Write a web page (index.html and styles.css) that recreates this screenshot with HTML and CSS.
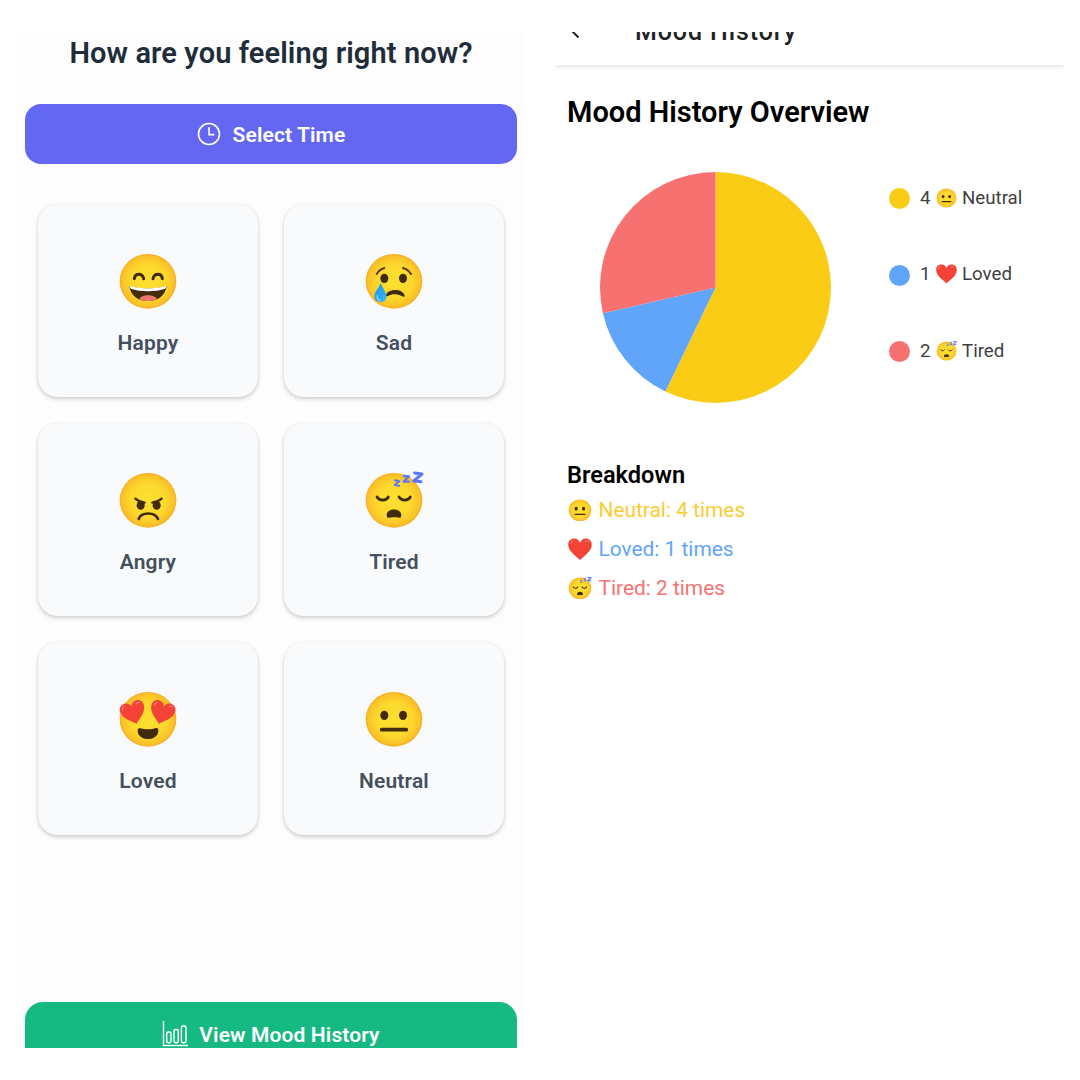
FILE: index.html
```html
<!DOCTYPE html>
<html lang="en">
<head>
<meta charset="utf-8">
<title>Mood Tracker</title>
<link rel="stylesheet" href="styles.css">
</head>
<body>
<svg class="defs" aria-hidden="true">
  <defs>
    <radialGradient id="skin" cx=".5" cy=".5" r=".52">
      <stop offset="0" stop-color="#fde030"/>
      <stop offset=".6" stop-color="#fcd82d"/>
      <stop offset=".88" stop-color="#fac228"/>
      <stop offset="1" stop-color="#f7a01f"/>
    </radialGradient>
    <linearGradient id="drop" x1="0" x2="1" y1="0" y2="1">
      <stop offset="0" stop-color="#1d8fe6"/>
      <stop offset="1" stop-color="#35b8fb"/>
    </linearGradient>
    <symbol id="heart" viewBox="0 0 100 92">
      <path fill="#f44336" d="M50 91C42 80 3 58 1 29C0 11 12 1 26 1C38 1 47 9 50 19C53 9 62 1 74 1C88 1 100 11 99 29C97 58 58 80 50 91Z"/>
      <path fill="#ff8276" d="M10 24C10 14 18 8 27 9C20 12 15 17 14 26ZM69 12C76 6 86 9 89 16C83 13 76 13 70 17Z"/>
    </symbol>
    <symbol id="happy" viewBox="0 0 180 170">
      <ellipse cx="90" cy="85" rx="85" ry="82" fill="url(#skin)"/>
      <path d="M49 77C51 59 73 59 77 77M105 77C109 59 131 59 133 77" fill="none" stroke="#422b0d" stroke-width="9" stroke-linecap="round"/>
      <path fill="#422b0d" d="M34 99C72 110 108 110 146 99C142 127 121 144 90 144C59 144 37 127 34 99Z"/>
      <path fill="#fff" d="M34 98C72 109 108 109 146 98L142 107C112 117 68 117 38 107Z"/>
      <path fill="#ed7770" d="M64 138C71 123 109 123 117 138C101 146 80 146 64 138Z"/>
    </symbol>
    <symbol id="sad" viewBox="0 0 180 170">
      <ellipse cx="90" cy="85" rx="85" ry="82" fill="url(#skin)"/>
      <path d="M38 63Q47 49 61 45M117 45Q132 49 141 63" fill="none" stroke="#5b3a0f" stroke-width="6" stroke-linecap="round"/>
      <ellipse cx="61" cy="76" rx="12" ry="14" fill="#422b0d"/><ellipse cx="117" cy="76" rx="12" ry="14" fill="#422b0d"/>
      <path fill="#422b0d" d="M66 130C65 106 118 104 122 128C122 133 117 131 113 129C98 122 84 123 72 129Z"/>
      <path fill="url(#drop)" d="M50 89C46 103 31 116 31 130C31 142 40 147 50 147C60 147 68 140 67 128C66 114 54 104 50 89Z"/>
      <path d="M40 128Q38 140 49 142" fill="none" stroke="#8bd6ff" stroke-width="4" stroke-linecap="round"/>
    </symbol>
    <symbol id="angry" viewBox="0 0 180 170">
      <ellipse cx="90" cy="85" rx="85" ry="82" fill="url(#skin)"/>
      <ellipse cx="68" cy="100" rx="12" ry="13" fill="#422b0d"/><ellipse cx="116" cy="100" rx="12" ry="13" fill="#422b0d"/>
      <path d="M52 80Q63 90 80 92M131 80Q120 90 103 92" fill="none" stroke="#422b0d" stroke-width="7" stroke-linecap="round"/>
      <path d="M62 141C70 119 111 119 120 141" fill="none" stroke="#422b0d" stroke-width="8" stroke-linecap="round"/>
    </symbol>
    <symbol id="tired" viewBox="0 0 180 170">
      <ellipse cx="90" cy="85" rx="85" ry="82" fill="url(#skin)"/>
      <path d="M39 75C46 87 66 88 73 75M105 75C112 87 132 88 139 75" fill="none" stroke="#422b0d" stroke-width="8" stroke-linecap="round"/>
      <path fill="#422b0d" d="M68 131C67 106 113 106 112 131C111 141 102 136 90 136C78 136 69 141 68 131Z"/>
      <g fill="none" stroke="#5c77fb" stroke-linejoin="round" stroke-linecap="round">
        <path stroke-width="6" d="M93 25L106 28L92 39L105 41"/>
        <path stroke-width="7" d="M120 12L135 13L119 29L135 29"/>
        <path stroke-width="9" d="M152 3L174 6L149 27L171 29"/>
      </g>
    </symbol>
    <symbol id="loved" viewBox="0 0 180 170">
      <ellipse cx="90" cy="85" rx="85" ry="82" fill="url(#skin)"/>
      <use href="#heart" x="8" y="31" width="76" height="70" transform="rotate(-16 46 66)"/>
      <use href="#heart" x="94" y="31" width="76" height="70" transform="rotate(16 132 66)"/>
      <path fill="#422b0d" d="M59 119C59 108 68 112 74 113Q90 117 106 113C113 111 121 108 121 119C121 134 107 144 90 144C73 144 59 134 59 119Z"/>
    </symbol>
    <symbol id="neutral" viewBox="0 0 180 170">
      <ellipse cx="90" cy="85" rx="85" ry="82" fill="url(#skin)"/>
      <ellipse cx="61" cy="73" rx="12" ry="14" fill="#422b0d"/><ellipse cx="117" cy="73" rx="12" ry="14" fill="#422b0d"/>
      <path d="M53 116H127" stroke="#422b0d" stroke-width="11" stroke-linecap="round"/>
    </symbol>
  </defs>
</svg>

<main class="screens">
  <section class="screen picker">
    <h1 class="question">How are you feeling right now?</h1>
    <button class="button time">
      <svg class="clock" viewBox="0 0 24 24"><circle cx="12" cy="12" r="10.5"/><path d="M12 5V12.6H17.3"/></svg>
      <span>Select Time</span>
    </button>
    <div class="moods">
      <div class="mood"><svg class="face"><use href="#happy"/></svg><span>Happy</span></div>
      <div class="mood"><svg class="face"><use href="#sad"/></svg><span>Sad</span></div>
      <div class="mood"><svg class="face"><use href="#angry"/></svg><span>Angry</span></div>
      <div class="mood"><svg class="face"><use href="#tired"/></svg><span>Tired</span></div>
      <div class="mood"><svg class="face"><use href="#loved"/></svg><span>Loved</span></div>
      <div class="mood"><svg class="face"><use href="#neutral"/></svg><span>Neutral</span></div>
    </div>
    <button class="button history">
      <svg class="bars" viewBox="0 0 26 26"><path d="M1.5 0V24.5H26"/><rect x="4.7" y="11" width="4.3" height="10.7" rx="1.7"/><rect x="12" y="8.5" width="4.3" height="13.2" rx="1.7"/><rect x="19.4" y="5" width="4.6" height="16.7" rx="1.7"/></svg>
      <span>View Mood History</span>
    </button>
  </section>

  <section class="screen overview">
    <header class="toolbar">
      <svg class="back" viewBox="0 0 18 18"><path d="M17 8H2M9.5 .5L2 8L9.5 15.5"/></svg>
      <span class="toolbar-title">Mood History</span>
    </header>
    <h2 class="heading">Mood History Overview</h2>
    <div class="chart">
      <svg class="pie" viewBox="-115.5 -115.5 231 231">
        <path fill="#facc15" d="M0 0V-115.5A115.5 115.5 0 1 1 -50.11 104.06Z"/>
        <path fill="#60a5fa" d="M0 0L-50.11 104.06A115.5 115.5 0 0 1 -112.6 25.7Z"/>
        <path fill="#f87171" d="M0 0L-112.6 25.7A115.5 115.5 0 0 1 0 -115.5Z"/>
      </svg>
      <ul class="legend">
        <li><i class="dot yellow"></i><span class="count">4</span><svg class="mini"><use href="#neutral"/></svg><span>Neutral</span></li>
        <li><i class="dot blue"></i><span class="count">1</span><svg class="mini"><use href="#heart"/></svg><span>Loved</span></li>
        <li><i class="dot red"></i><span class="count">2</span><svg class="mini"><use href="#tired"/></svg><span>Tired</span></li>
      </ul>
    </div>
    <h3 class="subheading">Breakdown</h3>
    <ul class="breakdown">
      <li class="t-yellow"><svg class="small"><use href="#neutral"/></svg><span>Neutral: 4 times</span></li>
      <li class="t-blue"><svg class="small"><use href="#heart"/></svg><span>Loved: 1 times</span></li>
      <li class="t-red"><svg class="small"><use href="#tired"/></svg><span>Tired: 2 times</span></li>
    </ul>
  </section>
</main>
</body>
</html>
```
FILE: styles.css
```css
* { box-sizing: border-box; margin: 0; padding: 0; }
body { width: 1080px; height: 1080px; overflow: hidden; background: #fff; font-family: Roboto, "Liberation Sans", sans-serif; }
ul { list-style: none; }
symbol, svg { overflow: visible; }
.defs { display: block; width: 0; height: 0; }
.screens { display: flex; gap: 32px; padding: 32px 16px; }
.screen { width: 508px; height: 1015.5px; overflow: hidden; display: flex; flex-direction: column; }

.picker { background: #fdfdfd; padding: 0 7px 0 9px; }
.question { height: 42px; line-height: 42px; flex: none; text-align: center; font-size: 29px; letter-spacing: .1px; font-weight: 600; color: #1f2d3b; white-space: nowrap; }
.button { flex: none; display: flex; align-items: center; justify-content: center; border: 0; color: #fff; font: 600 21px/30px Roboto, "Liberation Sans", sans-serif; letter-spacing: .12px; white-space: nowrap; }
.button svg { fill: none; stroke: #fff; }
.button span { padding-top: 1px; }
.time { height: 60px; margin-top: 30px; border-radius: 16px; background: #6467f2; gap: 12px; }
.clock { width: 24px; height: 24px; stroke-width: 1.6; }
.moods { display: grid; grid-template-columns: 220px 220px; grid-auto-rows: 192.5px; gap: 26.5px 26px; justify-content: center; margin-top: 40px; }
.mood { display: flex; flex-direction: column; align-items: center; padding-top: 48.5px; border-radius: 20px; background: #f9fafc; box-shadow: 0 2px 4px rgba(0,0,0,.19), 0 0 2px rgba(0,0,0,.06); color: #45505e; font-size: 21px; font-weight: 600; letter-spacing: .15px; line-height: 30px; }
.face { width: 60px; height: 56.67px; margin-bottom: 19px; }
.history { height: 64px; margin-top: 167.5px; border-radius: 18px; background: #15b981; gap: 11px; }
.bars { width: 26px; height: 26px; stroke-width: 1.4; }

.overview { background: #fff; }
.toolbar { flex: none; height: 68px; margin-top: -35px; padding-left: 13px; display: flex; align-items: center; background: #fff; box-shadow: 0 1px 5px rgba(0,0,0,.16); }
.back { width: 18px; height: 18px; fill: none; stroke: #222; stroke-width: 2; }
.toolbar-title { margin-left: 48px; font-size: 25px; letter-spacing: .9px; font-weight: 500; color: #222; white-space: nowrap; }
.heading { margin: 27px 0 0 11px; font-size: 29px; line-height: 41px; font-weight: 600; color: #000; white-space: nowrap; }
.chart { display: flex; margin: 38.5px 0 0 43.5px; }
.pie { width: 231px; height: 231px; }
.legend { margin: 11px 0 0 58px; display: flex; flex-direction: column; gap: 46.7px; }
.legend li { display: flex; align-items: center; height: 30px; font-size: 18.7px; color: #3f3f3f; white-space: nowrap; }
.dot { width: 21px; height: 21px; border-radius: 50%; margin-right: 10.5px; position: relative; top: 1px; }
.yellow { background: #facc15; }
.blue { background: #60a5fa; }
.red { background: #f87171; }
.count { width: 16px; }
.mini { width: 21px; height: 20px; margin-right: 5px; }
.subheading { margin: 57px 0 0 11px; font-size: 23.6px; line-height: 30px; font-weight: 600; color: #000; }
.breakdown { margin: 1px 0 0 12px; }
.breakdown li { display: flex; align-items: center; gap: 6.5px; height: 39px; font-size: 20.9px; white-space: nowrap; }
.small { width: 24px; height: 22.5px; }
.t-yellow { color: #facc33; }
.t-blue { color: #60a5fa; }
.t-red { color: #f87171; }
```
